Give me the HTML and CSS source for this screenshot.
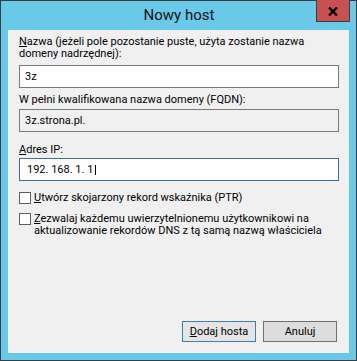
FILE: index.html
```html
<!DOCTYPE html>
<html lang="pl">
<head>
    <meta charset="UTF-8">
    <meta name="viewport" content="width=device-width, initial-scale=1.0">
    <title>Nowy host</title>
    <link rel="stylesheet" href="styles.css">
</head>
<body>
    <div class="window">
        <div class="titlebar">
            <span></span>
            <h1 class="title">Nowy host</h1>
            <button class="close-btn" aria-label="Zamknij">
                <svg width="10" height="9" viewBox="0 0 10 9">
                    <path d="M1 0.5 L9 8.5 M9 0.5 L1 8.5" stroke="#000" stroke-width="2.4" fill="none"/>
                </svg>
            </button>
        </div>

        <div class="client">
            <div class="field-group group-name">
                <label class="label"><u>N</u>azwa (jeżeli pole pozostanie puste, użyta zostanie nazwa<br>domeny nadrzędnej):</label>
                <div class="textbox">3z</div>
            </div>

            <div class="field-group group-fqdn">
                <label class="label">W pełni kwalifikowana nazwa domeny (FQDN):</label>
                <div class="textbox readonly">3z.strona.pl.</div>
            </div>

            <div class="field-group group-ip">
                <label class="label"><u>A</u>dres IP:</label>
                <div class="textbox focused ip">192. 168. 1. 1<span class="caret"></span></div>
            </div>

            <div class="checks">
                <div class="check-row">
                    <span class="checkbox"></span>
                    <span class="check-text"><u>U</u>twórz skojarzony rekord wskaźnika (PTR)</span>
                </div>
                <div class="check-row">
                    <span class="checkbox"></span>
                    <span class="check-text"><u>Z</u>ezwalaj każdemu uwierzytelnionemu użytkownikowi na<br>aktualizowanie rekordów DNS z tą samą nazwą właściciela</span>
                </div>
            </div>

            <div class="buttons">
                <button class="btn btn-default"><u>D</u>odaj hosta</button>
                <button class="btn">Anuluj</button>
            </div>
        </div>
    </div>
</body>
</html>
```
FILE: styles.css
```css
* {
    margin: 0;
    padding: 0;
    box-sizing: border-box;
}

body {
    background-color: #69c9e9;
    font-family: Roboto, "Liberation Sans", sans-serif;
    font-size: 11px;
    line-height: 12px;
    color: #000;
}

.window {
    width: 357px;
    height: 361px;
    background-color: #69c9e9;
    border: 1px solid #3d3d3d;
    display: flex;
    flex-direction: column;
}

/* Barra de título */
.titlebar {
    height: 29px;
    display: grid;
    grid-template-columns: 1fr auto 1fr;
    align-items: start;
}

.title {
    font-size: 15px;
    font-weight: normal;
    line-height: 29px;
    color: #111;
    padding-left: 1px;
}

.close-btn {
    justify-self: end;
    width: 34px;
    height: 22px;
    margin-top: -1px;
    margin-right: 6px;
    background-color: #c75050;
    border: 1px solid #3d3d3d;
    border-top: none;
    display: flex;
    align-items: center;
    justify-content: center;
    padding-top: 1px;
}

/* Área do conteúdo */
.client {
    flex: 1;
    margin: 0 7px 7px 7px;
    background-color: #f0f0f0;
    padding: 6px 10px 11px 11px;
    display: flex;
    flex-direction: column;
}

.field-group {
    display: flex;
    flex-direction: column;
}

.group-name .label {
    margin-bottom: 5px;
}

.group-fqdn {
    margin-top: 6px;
}

.group-fqdn .label {
    margin-bottom: 3px;
}

.group-ip {
    margin-top: 12px;
}

.group-ip .label {
    margin-bottom: 2px;
}

.textbox {
    height: 23px;
    border: 1px solid #7a7a7a;
    background-color: #fff;
    padding: 0 5px;
    display: flex;
    align-items: center;
}

.textbox.readonly {
    background-color: #f0f0f0;
}

.textbox.focused {
    border-color: #3b6f9f;
}

.textbox.ip {
    padding-left: 7px;
}

.caret {
    display: inline-block;
    width: 1px;
    height: 10px;
    background-color: #000;
    margin-left: 2px;
}

.checks {
    margin-top: 11px;
    display: flex;
    flex-direction: column;
    gap: 9px;
}

.check-row {
    display: flex;
    align-items: flex-start;
}

.checkbox {
    width: 12px;
    height: 12px;
    flex-shrink: 0;
    border: 1px solid #5f5f5f;
    background-color: #fff;
    margin-right: 3px;
}

.buttons {
    margin-top: auto;
    display: flex;
    justify-content: flex-end;
    gap: 7px;
    padding-right: 2px;
}

.btn {
    width: 74px;
    height: 21px;
    font-family: Roboto, "Liberation Sans", sans-serif;
    font-size: 11px;
    color: #000;
    background-color: #dddddd;
    border: 1px solid #707070;
}

.btn-default {
    background-color: #e5e5e5;
    border-color: #3c7fb1;
}
```
